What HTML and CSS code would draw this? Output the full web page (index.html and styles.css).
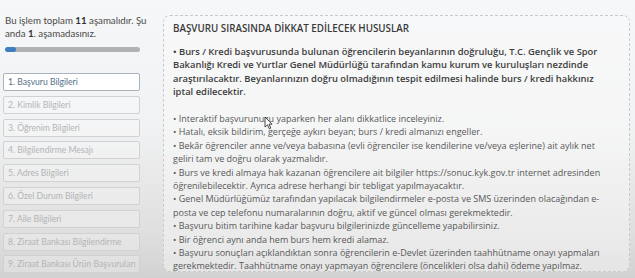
FILE: index.html
```html
<!DOCTYPE html>
<html lang="tr">
<head>
<meta charset="utf-8">
<link rel="stylesheet" href="styles.css">
</head>
<body>
<div class="page">
  <aside class="sidebar">
    <p class="intro">Bu işlem toplam <b>11</b> aşamalıdır. Şu<br>anda <b>1</b>. aşamadasınız.</p>
    <div class="progress"><div class="progress-fill" style="width:8%"></div></div>
    <ul class="steps">
      <li class="step active">1. Başvuru Bilgileri</li>
      <li class="step">2. Kimlik Bilgileri</li>
      <li class="step">3. Öğrenim Bilgileri</li>
      <li class="step">4. Bilgilendirme Mesajı</li>
      <li class="step">5. Adres Bilgileri</li>
      <li class="step">6. Özel Durum Bilgileri</li>
      <li class="step">7. Aile Bilgileri</li>
      <li class="step">8. Ziraat Bankası Bilgilendirme</li>
      <li class="step">9. Ziraat Bankası Ürün Başvuruları</li>
      <li class="step">10. Başvuru Onayı</li>
    </ul>
  </aside>
  <main class="notice">
    <h1 class="notice-title">BAŞVURU SIRASINDA DİKKAT EDİLECEK HUSUSLAR</h1>
    <p class="notice-strong">• Burs / Kredi başvurusunda bulunan öğrencilerin beyanlarının doğruluğu, T.C. Gençlik ve Spor Bakanlığı Kredi ve Yurtlar Genel Müdürlüğü tarafından kamu kurum ve kuruluşları nezdinde araştırılacaktır. Beyanlarınızın doğru olmadığının tespit edilmesi halinde burs / kredi hakkınız iptal edilecektir.</p>
    <ul class="notice-list">
      <li>• Interaktif başvurunuzu yaparken her alanı dikkatlice inceleyiniz.</li>
      <li>• Hatalı, eksik bildirim, gerçeğe aykırı beyan; burs / kredi almanızı engeller.</li>
      <li>• Bekâr öğrenciler anne ve/veya babasına (evli öğrenciler ise kendilerine ve/veya eşlerine) ait aylık net geliri tam ve doğru olarak yazmalıdır.</li>
      <li>• Burs ve kredi almaya hak kazanan öğrencilere ait bilgiler https://sonuc.kyk.gov.tr internet adresinden öğrenilebilecektir. Ayrıca adrese herhangi bir tebligat yapılmayacaktır.</li>
      <li>• Genel Müdürlüğümüz tarafından yapılacak bilgilendirmeler e-posta ve SMS üzerinden olacağından e-posta ve cep telefonu numaralarının doğru, aktif ve güncel olması gerekmektedir.</li>
      <li>• Başvuru bitim tarihine kadar başvuru bilgilerinizde güncelleme yapabilirsiniz.</li>
      <li>• Bir öğrenci aynı anda hem burs hem kredi alamaz.</li>
      <li>• Başvuru sonuçları açıklandıktan sonra öğrencilerin e-Devlet üzerinden taahhütname onayı yapmaları gerekmektedir. Taahhütname onayı yapmayan öğrencilere (öncelikleri olsa dahi) ödeme yapılmaz.</li>
    </ul>
    <svg class="cursor" width="9" height="14" viewBox="0 0 9 14"><path d="M1 1 L1 11 L3.5 8.8 L5.3 12.8 L6.8 12.1 L5 8.2 L8 8.2 Z" fill="#fff" stroke="#333" stroke-width="0.9"/></svg>
  </main>
</div>
</body>
</html>
```
FILE: styles.css
```css
* { box-sizing: border-box; }
html, body { margin: 0; padding: 0; height: 100%; overflow: hidden; }
body {
  background: linear-gradient(to bottom, #f6f7f8 0%, #f1f2f3 45%, #dedede 85%, #d2d2d2 100%);
  font-family: "Open Sans", "DejaVu Sans", sans-serif;
}
.page {
  display: flex;
  align-items: flex-start;
  height: 278px;
}
.sidebar {
  width: 145px;
  flex: 0 0 145px;
  padding: 14px 5px 0 3px;
  font-family: Lato, "Open Sans", sans-serif;
}
.intro {
  margin: 0 0 0 2px;
  font-size: 9.7px;
  line-height: 13px;
  color: #4a4a4a;
  white-space: nowrap;
}
.intro b { font-weight: 700; color: #333; }
.progress {
  margin: 7px 0 0 2px;
  height: 5px;
  border-radius: 3px;
  background: #b0b2b4;
  overflow: hidden;
}
.progress-fill {
  height: 100%;
  background: #3d7ec2;
  border-radius: 3px;
}
.steps {
  list-style: none;
  margin: 21px 0 0 0;
  padding: 0;
  display: flex;
  flex-direction: column;
  gap: 4.8px;
}
.step {
  height: 18px;
  border: 1px solid #cfd1d3;
  border-radius: 2px;
  background: rgba(255,255,255,0.25);
  font-size: 8.6px;
  line-height: 16px;
  padding-left: 4px;
  color: #b3b5b7;
  white-space: nowrap;
  overflow: hidden;
}
.step.active {
  background: #ffffff;
  border-color: #a9b3bd;
  color: #557089;
}
.notice {
  position: relative;
  margin: 15px 0 0 18px;
  width: 467px;
  height: 257px;
  border: 1px dashed #c9c9c9;
  border-radius: 7px;
  background: rgba(250,250,250,0.45);
  padding: 6px 20px 0 9px;
  color: #555;
}
.notice-title {
  margin: 0 0 9px 0;
  font-size: 9.8px;
  line-height: 14px;
  font-weight: 600;
  color: #3a3a3a;
}
.notice-strong {
  margin: 0 0 13.4px 0;
  font-size: 9.4px;
  line-height: 13.4px;
  font-weight: 600;
  color: #3d3d3d;
}
.notice-list {
  list-style: none;
  margin: 0;
  padding: 0;
  font-size: 9px;
  line-height: 13.4px;
  color: #585858;
}
.cursor {
  position: absolute;
  left: 100px;
  top: 100px;
}
```
